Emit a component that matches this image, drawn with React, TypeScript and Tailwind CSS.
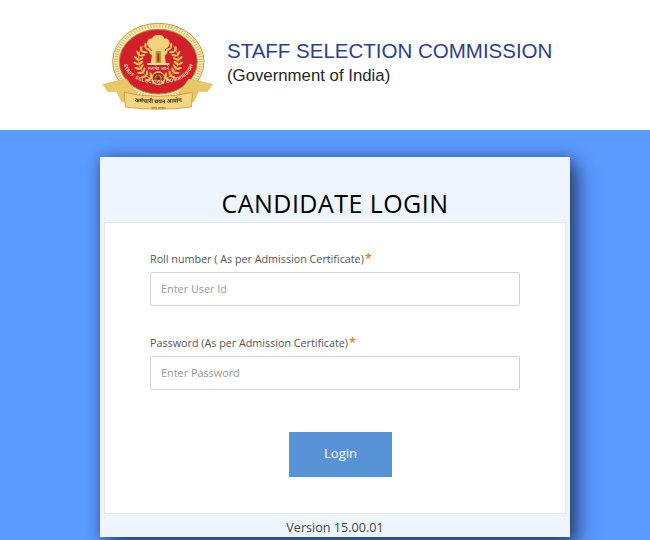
const sans = { fontFamily: '"Liberation Sans", Arial, sans-serif' };
const CX = 205;
const rad = (d: number) => (d * Math.PI) / 180;

function Branch({ flip }: { flip?: boolean }) {
  const leaves = [];
  for (let i = 0; i < 10; i++) {
    const a = rad(100 + i * 15);
    const x = CX + 60 * Math.cos(a);
    const y = 140 + 52 * Math.sin(a);
    const rot = 100 + i * 15 + 90;
    leaves.push(<ellipse key={`o${i}`} cx={x + 7 * Math.cos(a)} cy={y + 7 * Math.sin(a)} rx="3.4" ry="9" fill="#efc75e" transform={`rotate(${rot + 35} ${x + 7 * Math.cos(a)} ${y + 7 * Math.sin(a)})`} />);
    leaves.push(<ellipse key={`i${i}`} cx={x - 7 * Math.cos(a)} cy={y - 7 * Math.sin(a)} rx="3.4" ry="9" fill="#efc75e" transform={`rotate(${rot - 35} ${x - 7 * Math.cos(a)} ${y - 7 * Math.sin(a)})`} />);
  }
  return (
    <g transform={flip ? `translate(${2 * CX} 0) scale(-1 1)` : undefined}>
      <path d="M190 192C150 185 130 130 160 92" fill="none" stroke="#d9a93f" strokeWidth="3" />
      {leaves}
    </g>
  );
}

function Emblem() {
  const ticks = [];
  for (let i = 0; i < 90; i++) {
    const a = rad(i * 4);
    ticks.push(<line key={i} x1={CX + 122 * Math.cos(a)} y1={140 + 103 * Math.sin(a)} x2={CX + 133 * Math.cos(a)} y2={140 + 112 * Math.sin(a)} stroke="#c79a35" strokeWidth="2" />);
  }
  return (
    <svg width="130" height="105" viewBox="0 0 390 315" className="block shrink-0 blur-[0.35px]">
      <ellipse cx={CX} cy="140" rx="137" ry="115" fill="#f5e7b4" stroke="#c79a35" strokeWidth="3" />
      {ticks}
      <ellipse cx={CX} cy="140" rx="117" ry="97" fill="#d21f29" stroke="#b98a2b" strokeWidth="3" />
      <Branch />
      <Branch flip />
      <path d="M172 88c-3-12 6-20 14-17 2-8 8-11 19-11s17 3 19 11c8-3 17 5 14 17-1 8-6 12-12 14l-2 6h9l-3 10-6 2 4 26h-46l4-26-6-2-3-10h9l-2-6c-6-2-11-6-12-14z" fill="#f2d27a" />
      <path d="M197 108h16v36h-16z" fill="#c58f2e" />
      <path d="M202 116h6v24h-6z" fill="#8a4a1c" />
      <rect x="172" y="144" width="66" height="6" fill="#f8e08e" />
      <text x={CX} y="164" textAnchor="middle" fontSize="13" fill="#fbe9c8" fontFamily='"Noto Sans", sans-serif'>सत्यमेव जयते</text>
      <circle cx={CX} cy="190" r="19" fill="#8e2a1e" stroke="#efc75e" strokeWidth="4" />
      <circle cx={CX} cy="190" r="9" fill="none" stroke="#e7b44a" strokeWidth="5" strokeDasharray="2 2" />
      <path id="ssc-arc" d="M101 146C110 226 300 226 309 146" fill="none" />
      <text fontSize="14.5" fontWeight="700" fill="#fbe6a8" letterSpacing="1" fontFamily='"Liberation Sans", sans-serif'>
        <textPath href="#ssc-arc" startOffset="50%" textAnchor="middle">STAFF SELECTION COMMISSION</textPath>
      </text>
      <path d="M38 208l72-17 30 45-24 26-22-3-14-30-26 1z" fill="#e9c766" stroke="#c79a35" strokeWidth="1" />
      <path d="M368 208l-72-17-30 45 24 26 22-3 14-30 26 1z" fill="#e9c766" stroke="#c79a35" strokeWidth="1" />
      <path d="M102 232q103 24 206 0l-4 44q-99 14-198 0z" fill="#f2d680" stroke="#b98a2b" strokeWidth="2" />
      <path id="ssc-rib" d="M112 258q93 13 186 0" fill="none" />
      <text fontSize="17" fontWeight="700" fill="#4a2a10" fontFamily='"Noto Sans", sans-serif'>
        <textPath href="#ssc-rib" startOffset="50%" textAnchor="middle">कर्मचारी चयन आयोग</textPath>
      </text>
      <text x={CX} y="281" textAnchor="middle" fontSize="9" fill="#6a4a20" fontFamily='"Noto Sans", sans-serif'>भारत सरकार</text>
    </svg>
  );
}

function Field({ label, placeholder }: { label: string; placeholder: string }) {
  return (
    <div>
      <div className="h-[20px] text-[10.75px] leading-[20px] text-[#555]">
        {label}
        <span className="ml-[1px] text-[13px] leading-[14px] font-semibold text-[#e8802a]">*</span>
      </div>
      <input
        readOnly
        placeholder={placeholder}
        className="mt-[3px] block h-[34px] w-full rounded-[2px] border border-[#d4d4d4] bg-white px-[10px] pb-[2px] text-[10.85px] text-[#555] outline-none placeholder:text-[#999]"
      />
    </div>
  );
}

export default function App() {
  return (
    <div className="h-[540px] w-[650px] overflow-hidden bg-[#5b9aff]" style={{ fontFamily: '"Open Sans", sans-serif' }}>
      <header className="flex h-[130px] items-start bg-white pl-[90px] pt-[15px]">
        <Emblem />
        <div className="ml-[7px] pt-[24px]" style={sans}>
          <div className="text-[20.5px] leading-[24px] whitespace-nowrap text-[#2c3f8f]">STAFF SELECTION COMMISSION</div>
          <div className="mt-[3px] text-[16.8px] leading-[20px] whitespace-nowrap text-[#262626]">(Government of India)</div>
        </div>
      </header>
      <main className="ml-[100px] mt-[27px] flex h-[380px] w-[470px] flex-col bg-[#edf6ff] px-[4px] shadow-[8px_8px_18px_rgba(20,30,60,0.65),0_0_12px_rgba(20,30,60,0.35)]">
        <h1 className="h-[65px] pt-[28px] text-center text-[25px] leading-[36px] font-medium tracking-[0.45px] text-black">CANDIDATE LOGIN</h1>
        <section className="flex h-[292px] w-[462px] flex-col border border-[#e6e9ec] bg-white px-[45px] pt-[26px]">
          <Field label="Roll number ( As per Admission Certificate)" placeholder="Enter User Id" />
          <div className="mt-[27px]">
            <Field label="Password (As per Admission Certificate)" placeholder="Enter Password" />
          </div>
          <button className="ml-[139px] mt-[42px] h-[45px] w-[103px] bg-[#5792d6] pb-[2px] text-[13px] font-medium text-white">Login</button>
        </section>
        <footer className="h-[23px] text-center text-[12.6px] leading-[27px] text-[#444]">Version 15.00.01</footer>
      </main>
    </div>
  );
}
